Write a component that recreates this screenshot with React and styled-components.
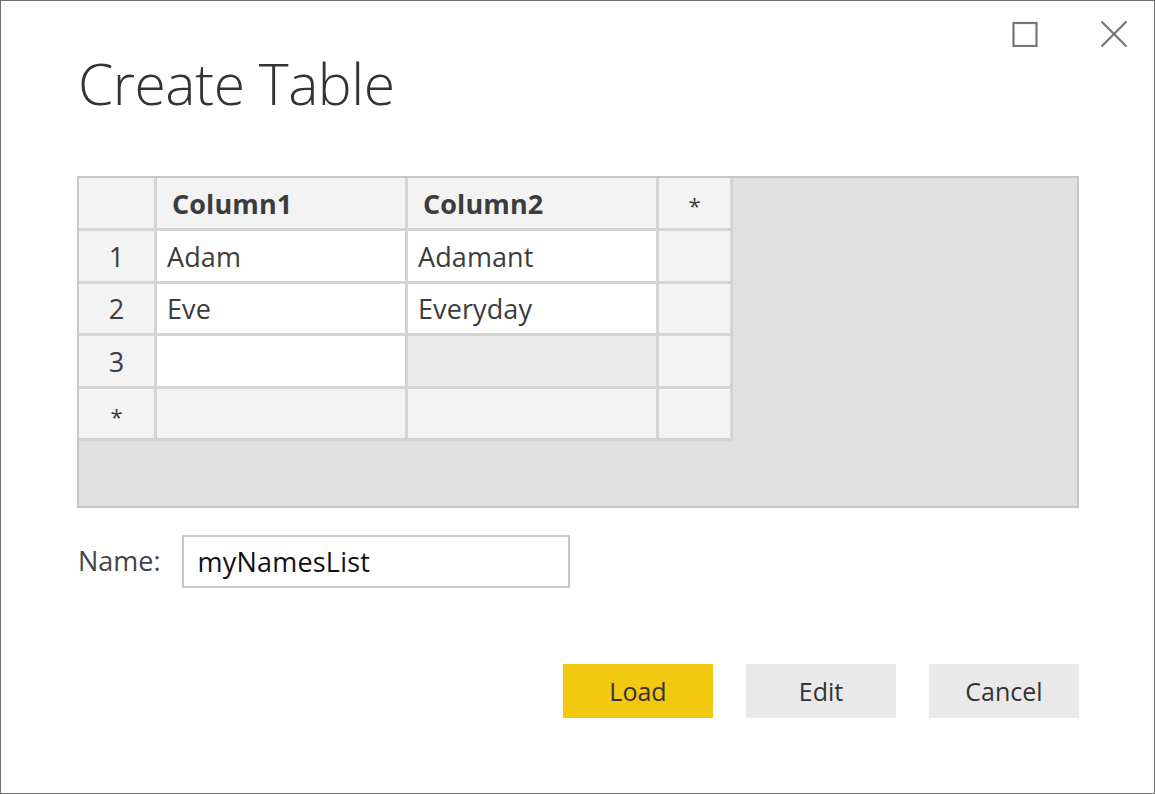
import React from "react";
import styled, { createGlobalStyle } from "styled-components";

const Global = createGlobalStyle`
  html, body { margin: 0; padding: 0; background: #ffffff; }
  * { box-sizing: border-box; }
  body { font-family: "Open Sans", "Noto Sans", sans-serif; color: #333; }
`;

const Window = styled.div`
  width: 1155px;
  height: 794px;
  border: 1px solid #6e6e6e;
  background: #fff;
  display: flex;
  flex-direction: column;
`;

const ControlBar = styled.div`
  display: flex;
  justify-content: flex-end;
  align-items: flex-start;
  gap: 61px;
  padding: 19px 26px 0 0;
  height: 45px;
`;

const ControlButton = styled.button`
  width: 28px;
  height: 28px;
  padding: 0;
  border: none;
  background: transparent;
  display: flex;
  align-items: center;
  justify-content: center;
  color: #767676;
`;

const Body = styled.div`
  padding: 0 75px 0 76px;
  display: flex;
  flex-direction: column;
`;

const Title = styled.h1`
  margin: 2px 0 58px 1px;
  font-family: "Open Sans", "Noto Sans", sans-serif;
  font-weight: 300;
  font-size: 57px;
  line-height: 70px;
  height: 70px;
  color: #333;
  letter-spacing: -0.5px;
`;

const TableArea = styled.div`
  height: 332px;
  border: 2px solid #c6c6c6;
  background: #e0e0e0;
  display: flex;
  align-items: flex-start;
`;

const Grid = styled.div`
  display: grid;
  grid-template-columns: 75px 248px 248px 71px;
  grid-template-rows: 50px 50px 49px 50px 49px;
  gap: 3px;
  padding: 0 3px 3px 0;
  background: #d4d4d4;
`;

const Cell = styled.div`
  background: ${(p) =>
    p.$tone === "white" ? "#ffffff" : p.$tone === "dim" ? "#eaeaea" : "#f3f3f3"};
  display: flex;
  align-items: center;
  justify-content: ${(p) => (p.$center ? "center" : "flex-start")};
  padding-left: ${(p) => (p.$center ? "0" : p.$head ? "15px" : "10px")};
  font-family: "Open Sans", "Noto Sans", sans-serif;
  font-size: 27px;
  font-weight: ${(p) => (p.$head ? 700 : 400)};
  color: #3c3c3c;
  letter-spacing: ${(p) => (p.$head ? "0.1px" : "0.1px")};
  white-space: nowrap;
`;

const Star = styled.span`
  font-size: 22px;
  line-height: 1;
  margin-top: 4px;
`;

const NameRow = styled.div`
  margin-top: 27px;
  display: flex;
  align-items: center;
  gap: 21px;
  padding-left: 1px;
`;

const Label = styled.label`
  font-family: "Open Sans", "Noto Sans", sans-serif;
  font-size: 27px;
  color: #454545;
  margin-top: -3px;
`;

const NameInput = styled.div`
  width: 388px;
  height: 53px;
  border: 2px solid #c8c8c8;
  display: flex;
  align-items: center;
  padding-left: 14px;
  font-family: "Open Sans", "Noto Sans", sans-serif;
  font-size: 27px;
  color: #111;
  letter-spacing: 0.2px;
`;

const Actions = styled.div`
  margin-top: 76px;
  display: flex;
  justify-content: flex-end;
  gap: 33px;
`;

const ActionButton = styled.button`
  width: 150px;
  height: 54px;
  border: none;
  background: ${(p) => (p.$primary ? "#f2c811" : "#e9e9e9")};
  font-family: "Open Sans", "Noto Sans", sans-serif;
  font-size: 25px;
  color: #333;
  padding: 0;
`;

const rows = [
  { head: "1", a: "Adam", b: "Adamant", tones: ["white", "white"] },
  { head: "2", a: "Eve", b: "Everyday", tones: ["white", "white"] },
  { head: "3", a: "", b: "", tones: ["white", "dim"] },
];

export default function App() {
  return (
    <>
      <Global />
      <Window>
        <ControlBar>
          <ControlButton aria-label="Maximize">
            <svg width="26" height="26" viewBox="0 0 26 26">
              <rect x="1.5" y="2" width="23" height="23" fill="none" stroke="currentColor" strokeWidth="2.2" />
            </svg>
          </ControlButton>
          <ControlButton aria-label="Close">
            <svg width="28" height="28" viewBox="0 0 28 28">
              <path d="M1.5 1.5 L26.5 26.5 M26.5 1.5 L1.5 26.5" stroke="currentColor" strokeWidth="2.2" fill="none" />
            </svg>
          </ControlButton>
        </ControlBar>
        <Body>
          <Title>Create Table</Title>
          <TableArea>
            <Grid>
              <Cell />
              <Cell $head>Column1</Cell>
              <Cell $head>Column2</Cell>
              <Cell $center>
                <Star>*</Star>
              </Cell>
              {rows.map((r) => (
                <React.Fragment key={r.head}>
                  <Cell $center>{r.head}</Cell>
                  <Cell $tone={r.tones[0]}>{r.a}</Cell>
                  <Cell $tone={r.tones[1]}>{r.b}</Cell>
                  <Cell />
                </React.Fragment>
              ))}
              <Cell $center>
                <Star>*</Star>
              </Cell>
              <Cell />
              <Cell />
              <Cell />
            </Grid>
          </TableArea>
          <NameRow>
            <Label>Name:</Label>
            <NameInput>myNamesList</NameInput>
          </NameRow>
          <Actions>
            <ActionButton $primary>Load</ActionButton>
            <ActionButton>Edit</ActionButton>
            <ActionButton>Cancel</ActionButton>
          </Actions>
        </Body>
      </Window>
    </>
  );
}
